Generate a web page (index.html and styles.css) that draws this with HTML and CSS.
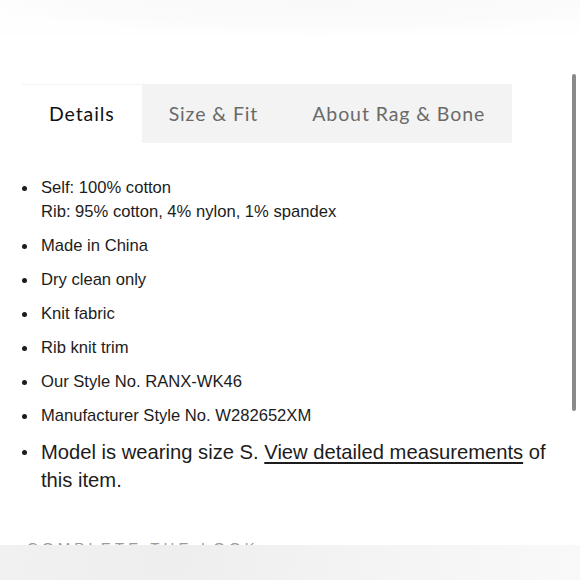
FILE: index.html
```html
<!DOCTYPE html>
<html>
<head>
<meta charset="utf-8">
<link rel="stylesheet" href="styles.css">
</head>
<body>
<div class="page">
  <div class="topband"></div>
  <div class="tabs">
    <div class="tab active">Details</div>
    <div class="tab">Size &amp; Fit</div>
    <div class="tab">About Rag &amp; Bone</div>
  </div>
  <ul class="details">
    <li>Self: 100% cotton<br>Rib: 95% cotton, 4% nylon, 1% spandex</li>
    <li>Made in China</li>
    <li>Dry clean only</li>
    <li>Knit fabric</li>
    <li>Rib knit trim</li>
    <li>Our Style No. RANX-WK46</li>
    <li>Manufacturer Style No. W282652XM</li>
    <li class="model">Model is wearing size S. <a href="#">View detailed measurements</a> of this item.</li>
  </ul>
  <h2 class="look">COMPLETE THE LOOK</h2>
  <div class="fade"></div>
  <div class="scrollbar"></div>
</div>
</body>
</html>
```
FILE: styles.css
```css
html, body {
  margin: 0;
  padding: 0;
  background: #fff;
}
.page {
  position: relative;
  width: 580px;
  height: 580px;
  overflow: hidden;
  font-family: "Liberation Sans", Arial, sans-serif;
  color: #1a1a1a;
}
.topband {
  height: 35px;
  background: radial-gradient(ellipse 60% 100% at 55% 0%, #f9f9f9 0%, #fbfbfb 70%, #fefefe 100%);
  margin-bottom: 49px;
}
.tabs {
  display: flex;
  margin-left: 22px;
  width: max-content;
  height: 59px;
  background: #f3f3f3;
  font-family: Lato, "Liberation Sans", sans-serif;
  font-size: 19.5px;
  letter-spacing: 0.9px;
  white-space: nowrap;
}
.tab {
  display: flex;
  align-items: center;
  flex-shrink: 0;
  padding: 0 27px;
  color: #6a6a6a;
}
.tab.active {
  background: #fff;
  color: #111;
  box-shadow: inset 0 1px 0 #f4f4f4;
}
.details {
  list-style: none;
  margin: 33px 0 0 0;
  padding: 0 0 0 41px;
  font-size: 16.6px;
  line-height: 24px;
  color: #1c1c1c;
}
.details li {
  position: relative;
  margin-bottom: 10px;
}
.details li::before {
  content: "";
  position: absolute;
  left: -19px;
  top: 10px;
  width: 5px;
  height: 5px;
  border-radius: 50%;
  background: #1c1c1c;
}
.details li.model {
  font-size: 20.2px;
  line-height: 28px;
  padding-right: 18px;
}
.details li.model::before {
  top: 12px;
}
.details a {
  color: #1c1c1c;
  text-decoration: underline;
  text-underline-offset: 3px;
}
.look {
  margin: 44px 0 0 27px;
  font-size: 15px;
  font-weight: 400;
  letter-spacing: 4.1px;
  color: #9a9a9a;
  line-height: 20px;
}
.fade {
  position: absolute;
  left: 0;
  right: 0;
  top: 545px;
  bottom: 0;
  background: linear-gradient(100deg, #f1f1f1 0%, #eeeeee 30%, #f4f4f4 65%, #f9f9f9 100%);
}
.scrollbar {
  position: absolute;
  left: 572px;
  top: 74px;
  width: 4px;
  height: 337px;
  border-radius: 2px;
  background: #8a8a8a;
}
```
